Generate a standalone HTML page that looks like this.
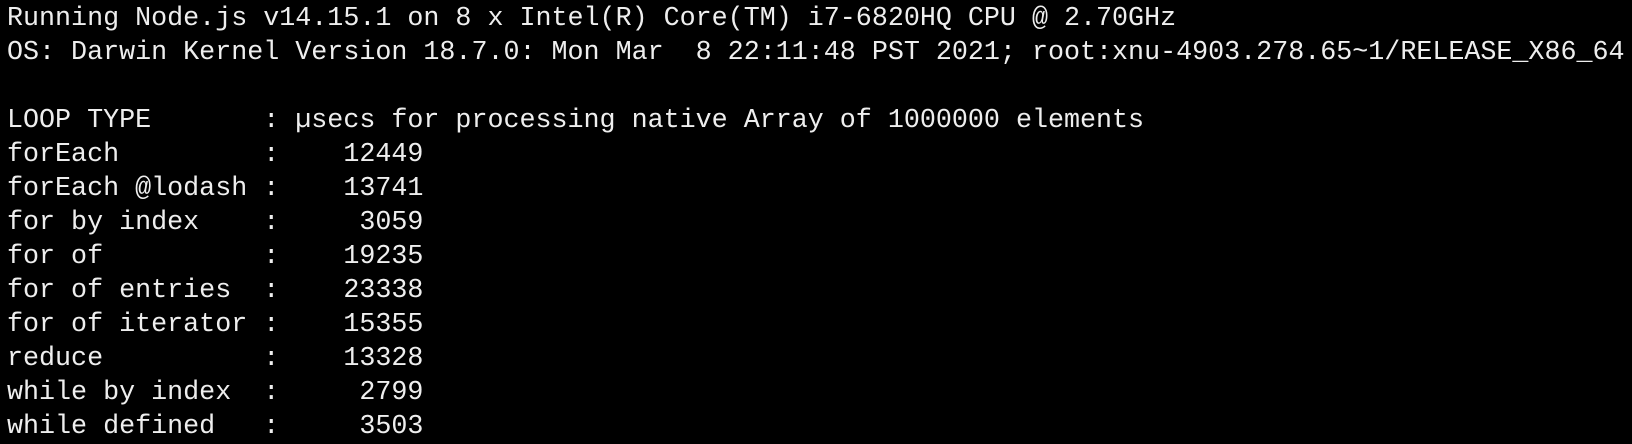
<!DOCTYPE html>
<html><head><meta charset="utf-8">
<style>
html,body{margin:0;padding:0;background:#000;}
body{width:1632px;height:440px;overflow:hidden;}
pre{margin:0;padding:2px 0 0 7px;font-family:"Liberation Mono",monospace;font-size:26.7px;line-height:34px;color:#eeeeee;white-space:pre;}
</style></head><body>
<pre>Running Node.js v14.15.1 on 8 x Intel(R) Core(TM) i7-6820HQ CPU @ 2.70GHz
OS: Darwin Kernel Version 18.7.0: Mon Mar  8 22:11:48 PST 2021; root:xnu-4903.278.65~1/RELEASE_X86_64

LOOP TYPE       : µsecs for processing native Array of 1000000 elements
forEach         :    12449
forEach @lodash :    13741
for by index    :     3059
for of          :    19235
for of entries  :    23338
for of iterator :    15355
reduce          :    13328
while by index  :     2799
while defined   :     3503</pre>
</body></html>
